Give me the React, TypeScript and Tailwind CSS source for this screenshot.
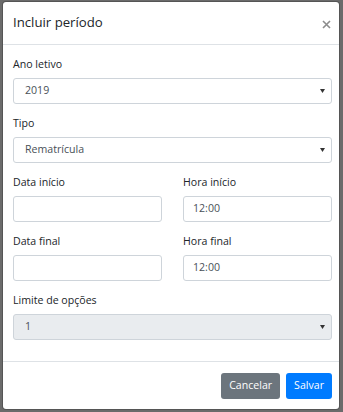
import React from 'react';

const font = { fontFamily: '"Segoe UI", "Open Sans", "Noto Sans", sans-serif' };

const Caret = () => (
  <svg width="5" height="4" viewBox="0 0 5 4" className="absolute right-[6px] top-1/2 -translate-y-1/2">
    <path d="M0 0 H5 L2.5 4 Z" fill="#333" />
  </svg>
);

const SelectBox = ({ value, disabled }: { value: string; disabled?: boolean }) => (
  <div
    className={`relative h-[26px] rounded-[3px] border border-[#ced4da] pl-[11px] flex items-center text-[10.6px] text-[#495057] ${
      disabled ? 'bg-[#e9ecef]' : 'bg-white'
    }`}
  >
    {value}
    <Caret />
  </div>
);

const InputBox = ({ value }: { value?: string }) => (
  <div className="h-[26px] rounded-[3px] border border-[#ced4da] bg-white pl-[9px] flex items-center text-[10.6px] text-[#495057]">
    {value}
  </div>
);

const Field = ({ label, children, last }: { label: string; children: React.ReactNode; last?: boolean }) => (
  <div className={last ? 'mb-[10px]' : 'mb-[11px]'}>
    <div className="h-[16px] leading-[16px] text-[10.6px] text-[#212529] mb-[6px]">{label}</div>
    {children}
  </div>
);

export default function App() {
  return (
    <div className="w-[343px] h-[412px] bg-[#6b6b6b] pt-[1px] pl-[2px]" style={font}>
      <div className="w-[338px] h-[409px] bg-white bg-clip-padding border border-black/20 rounded-[4px] flex flex-col">
        {/* Header */}
        <div className="h-[43px] border-b border-[#dee2e6] pl-[10px] pr-[8px] flex items-center justify-between">
          <h5 className="text-[13.2px] font-medium text-[#212529]">Incluir período</h5>
          <svg width="9" height="9" viewBox="0 0 9 9" className="mt-[2px]">
            <path d="M1 1 L8 8 M8 1 L1 8" stroke="#8c8c8c" strokeWidth="1.6" />
          </svg>
        </div>

        {/* Body */}
        <div className="pt-[11px] pb-[11px] pl-[10px] pr-[7px] border-b border-[#dee2e6]">
          <Field label="Ano letivo">
            <SelectBox value="2019" />
          </Field>
          <Field label="Tipo">
            <SelectBox value="Rematrícula" />
          </Field>
          <div className="grid grid-cols-2 gap-x-[21px]">
            <Field label="Data início">
              <InputBox />
            </Field>
            <Field label="Hora início">
              <InputBox value="12:00" />
            </Field>
            <Field label="Data final">
              <InputBox />
            </Field>
            <Field label="Hora final">
              <InputBox value="12:00" />
            </Field>
          </div>
          <Field label="Limite de opções" last>
            <SelectBox value="1" disabled />
          </Field>
        </div>

        {/* Footer */}
        <div className="flex justify-end gap-[6px] pt-[11px] pr-[7px]">
          <button className="h-[26px] px-[8px] rounded-[3px] bg-[#6c757d] text-white text-[10.6px]">Cancelar</button>
          <button className="h-[26px] px-[8px] rounded-[3px] bg-[#007bff] text-white text-[10.6px]">Salvar</button>
        </div>
      </div>
    </div>
  );
}
